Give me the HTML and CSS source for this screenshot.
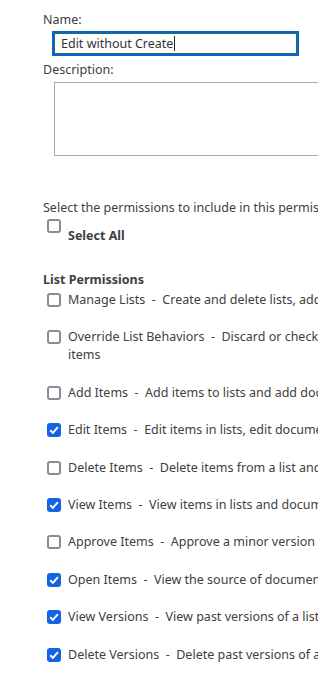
FILE: index.html
```html
<!DOCTYPE html>
<html lang="en">
<head>
    <meta charset="UTF-8">
    <link rel="stylesheet" href="styles.css">
</head>
<body>
    <div class="form">
        <div class="label">Name:</div>
        <div class="nameBox"><span class="nameText">Edit without Create</span><span class="caret"></span></div>

        <div class="label desc">Description:</div>
        <div class="descBox"></div>

        <div class="intro">Select the permissions to include in this permission level.</div>
        <div class="selectAll">
            <span class="box"></span>
            <span class="selectText">Select All</span>
        </div>

        <div class="groupTitle">List Permissions</div>
        <div class="perms">
            <div class="perm"><span class="box"></span><span class="permText">Manage Lists &nbsp;-&nbsp; Create and delete lists, add or remove columns in a list, and add or remove public views of a list.</span></div>
            <div class="perm"><span class="box"></span><span class="permText">Override List Behaviors &nbsp;-&nbsp; Discard or check in a document which is checked out to another user, and change or override settings which allow users to read/edit only their own items</span></div>
            <div class="perm"><span class="box"></span><span class="permText">Add Items &nbsp;-&nbsp; Add items to lists and add documents to document libraries.</span></div>
            <div class="perm"><span class="box checked"><svg viewBox="0 0 14 14"><path d="M3.2 7.2 L5.9 9.9 L10.9 4.1" /></svg></span><span class="permText">Edit Items &nbsp;-&nbsp; Edit items in lists, edit documents in document libraries, and customize Web Part Pages in document libraries.</span></div>
            <div class="perm"><span class="box"></span><span class="permText">Delete Items &nbsp;-&nbsp; Delete items from a list and documents from a document library.</span></div>
            <div class="perm"><span class="box checked"><svg viewBox="0 0 14 14"><path d="M3.2 7.2 L5.9 9.9 L10.9 4.1" /></svg></span><span class="permText">View Items &nbsp;-&nbsp; View items in lists and documents in document libraries.</span></div>
            <div class="perm"><span class="box"></span><span class="permText">Approve Items &nbsp;-&nbsp; Approve a minor version of a list item or document.</span></div>
            <div class="perm"><span class="box checked"><svg viewBox="0 0 14 14"><path d="M3.2 7.2 L5.9 9.9 L10.9 4.1" /></svg></span><span class="permText">Open Items &nbsp;-&nbsp; View the source of documents with server-side file handlers.</span></div>
            <div class="perm"><span class="box checked"><svg viewBox="0 0 14 14"><path d="M3.2 7.2 L5.9 9.9 L10.9 4.1" /></svg></span><span class="permText">View Versions &nbsp;-&nbsp; View past versions of a list item or document.</span></div>
            <div class="perm"><span class="box checked"><svg viewBox="0 0 14 14"><path d="M3.2 7.2 L5.9 9.9 L10.9 4.1" /></svg></span><span class="permText">Delete Versions &nbsp;-&nbsp; Delete past versions of a list item or document.</span></div>
        </div>
    </div>
</body>
</html>
```

FILE: styles.css
```css
*{
    padding: 0;
    margin: 0;
    box-sizing: border-box;
}

body{
    background-color: #fff;
    color: #404040;
    font-family: "Noto Sans", "Open Sans", sans-serif;
    font-size: 12.5px;
    line-height: 18px;
    overflow: hidden;
}

.form{
    width: 1100px;
    padding: 11px 0 0 43px;
}

.label{
    height: 18px;
}

.nameBox{
    display: flex;
    align-items: center;
    width: 247px;
    height: 25px;
    margin: 2px 0 0 9px;
    border: 2px solid #0a62cc;
    box-shadow: inset 0 0 0 1px #256f63;
    padding-left: 7px;
    color: #333;
}

.caret{
    display: inline-block;
    width: 1px;
    height: 15px;
    margin-left: 1px;
    background-color: #222;
}

.desc{
    margin-top: 5px;
}

.descBox{
    width: 300px;
    height: 74px;
    margin: 3px 0 0 11px;
    border: 1px solid #ababab;
}

.intro{
    margin-top: 43px;
    white-space: nowrap;
}

.selectAll{
    display: flex;
    align-items: flex-start;
    height: 54px;
}

.selectAll .box{
    margin: 2px 0 0 4px;
}

.selectText{
    font-weight: bold;
    margin: 10px 0 0 7px;
}

.groupTitle{
    font-weight: bold;
    height: 18px;
}

.perms{
    margin-top: 2px;
}

.perm{
    display: flex;
    align-items: flex-start;
    width: 1060px;
    margin-bottom: 19.4px;
}

.perm .box{
    margin: 2px 7px 0 4px;
}

.permText{
    flex: 1;
}

.box{
    flex: none;
    display: block;
    width: 14px;
    height: 14px;
    border: 2px solid #8c8a96;
    border-radius: 3px;
    background-color: #fff;
}

.box.checked{
    border: none;
    background-color: #1264e3;
}

.box svg{
    display: block;
    width: 14px;
    height: 14px;
}

.box svg path{
    fill: none;
    stroke: #fff;
    stroke-width: 2;
}
```
